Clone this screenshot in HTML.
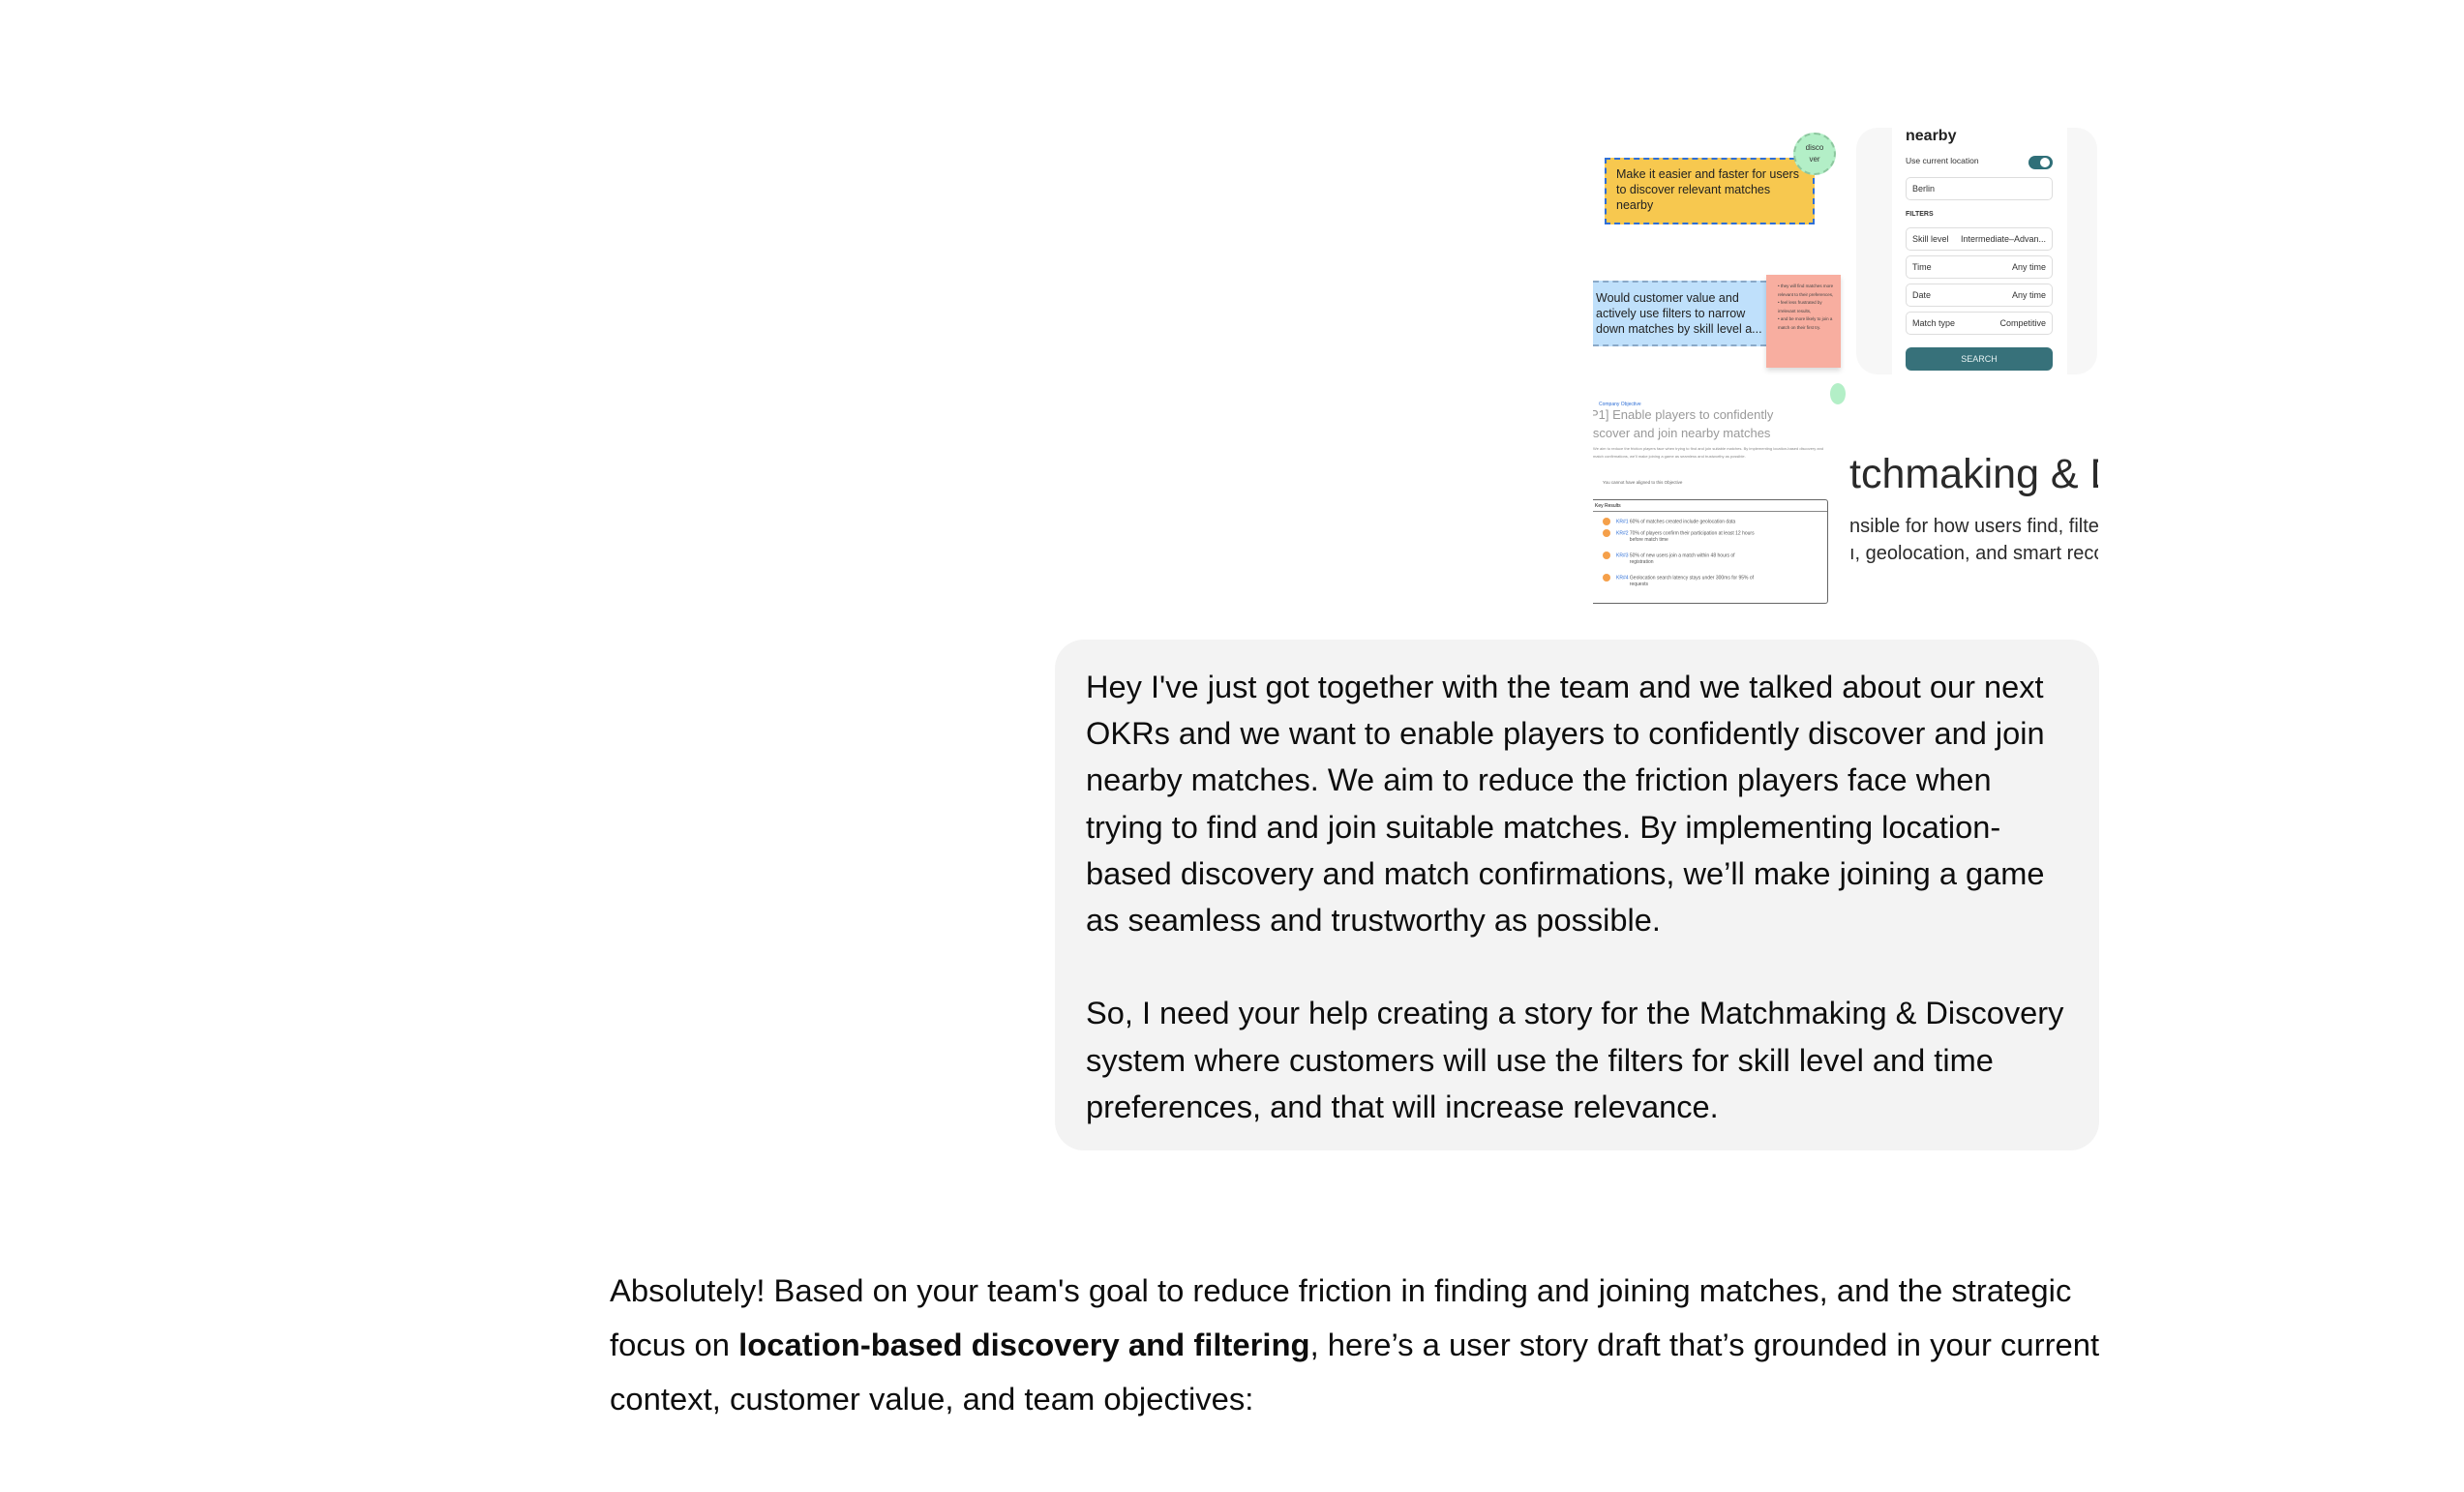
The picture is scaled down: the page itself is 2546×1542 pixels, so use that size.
<!DOCTYPE html>
<html><head><meta charset="utf-8"><style>
body{margin:0;width:2546px;height:1542px;background:#fff;font-family:"Liberation Sans",sans-serif;color:#0d0d0d;position:relative;overflow:hidden}
.abs{position:absolute}
.col{left:1646px;top:132px;width:522px;height:496px;overflow:hidden}
.col div{position:absolute;box-sizing:border-box}
.f{left:323px;width:152px;height:24px;border:1px solid #ddd;border-radius:5px;font-size:9px;padding:0 6px;display:flex;justify-content:space-between;align-items:center;color:#333}
.bub{left:1090px;top:661px;width:1079px;height:528px;background:#f3f3f3;border-radius:30px}
.bt{left:1122px;top:686px;font-size:32.6px;line-height:48.2px;white-space:nowrap}
.ans{left:630px;top:1306px;font-size:32.8px;line-height:56px;white-space:nowrap}
.kr{left:10px;font-size:5px;color:#555;white-space:nowrap}
.kr i{display:inline-block;width:8px;height:8px;border-radius:50%;background:#f5a04a;vertical-align:middle;margin-right:6px}
</style></head><body>
<div class="abs col">
 <div style="left:12px;top:31px;width:217px;height:69px;background:#f7c84f;border:2px dashed #2f6fd6;padding:7px 10px;font-size:12.5px;line-height:16px;color:#222">Make it easier and faster for users to discover relevant matches nearby</div>
 <div style="left:207px;top:5px;width:44px;height:44px;border-radius:50%;background:#b3efc7;border:2px dashed #8cc79e;font-size:8px;text-align:center;padding-top:8px;line-height:12px;color:#333">disco<br>ver</div>
 <div style="left:0;top:158px;width:179px;height:68px;background:#bfe0fb;border-top:2px dashed #8aa9c8;border-bottom:2px dashed #8aa9c8;padding:8px 3px;font-size:12.5px;line-height:16px;color:#222">Would customer value and actively use filters to narrow down matches by skill level a...</div>
 <div style="left:179px;top:152px;width:77px;height:96px;background:#f8aea0;box-shadow:0 3px 5px rgba(0,0,0,.15);font-size:4.5px;line-height:8.5px;padding:8px 4px 0 12px;color:#444">• they will find matches more relevant to their preferences,<br>• feel less frustrated by irrelevant results,<br>• and be more likely to join a match on their first try.</div>
 <div style="left:272px;top:0;width:249px;height:255px;background:#f7f7f7;border-radius:22px"></div>
 <div style="left:309px;top:0;width:181px;height:255px;background:#fff"></div>
 <div style="left:323px;top:0px;font-size:16px;font-weight:bold;color:#222">nearby</div>
 <div style="left:323px;top:29px;font-size:8.5px;color:#333">Use current location</div>
 <div style="left:450px;top:29px;width:25px;height:14px;border-radius:7px;background:#2f6f78"><div style="left:12px;top:2px;width:10px;height:10px;border-radius:50%;background:#fff"></div></div>
 <div class="f" style="top:51px">Berlin<span></span></div>
 <div style="left:323px;top:86px;font-size:7px;font-weight:bold;color:#333">FILTERS</div>
 <div class="f" style="top:103px">Skill level<span>Intermediate–Advan...</span></div>
 <div class="f" style="top:132px">Time<span>Any time</span></div>
 <div class="f" style="top:161px">Date<span>Any time</span></div>
 <div class="f" style="top:190px">Match type<span>Competitive</span></div>
 <div style="left:323px;top:227px;width:152px;height:24px;background:#37717a;border-radius:6px;color:#e6f2f3;font-size:9px;text-align:center;line-height:24px">SEARCH</div>
 <div style="left:245px;top:264px;width:16px;height:22px;background:#b3efc7;border-radius:50%"></div>
 <div style="left:6px;top:283px;font-size:5px;color:#2f6fd6">Company Objective</div>
 <div style="left:-3px;top:287px;font-size:13px;line-height:19px;color:#999;white-space:nowrap">P1] Enable players to confidently<br>iscover and join nearby matches</div>
 <div style="left:0;top:328px;width:250px;font-size:4px;line-height:8px;color:#888">We aim to reduce the friction players face when trying to find and join suitable matches. By implementing location-based discovery and match confirmations, we'll make joining a game as seamless and trustworthy as possible.</div>
 <div style="left:10px;top:364px;font-size:4.5px;color:#666">You cannot have aligned to this Objective</div>
 <div style="left:0;top:384px;width:243px;height:108px;border:1px solid #666;border-left:none;border-radius:0 3px 3px 0">
  <div style="left:0;top:0;width:242px;height:12px;border-bottom:1px solid #888;font-size:5px;padding:3px 2px">Key Results</div>
  <div class="kr" style="top:18px"><i></i><b style="color:#2f6fd6;font-weight:normal">KR#1</b> 60% of matches created include geolocation data</div>
  <div class="kr" style="top:30px"><i></i><b style="color:#2f6fd6;font-weight:normal">KR#2</b> 70% of players confirm their participation at least 12 hours<br>&nbsp;&nbsp;&nbsp;&nbsp;&nbsp;&nbsp;&nbsp;&nbsp;&nbsp;&nbsp;&nbsp;&nbsp;&nbsp;&nbsp;&nbsp;&nbsp;&nbsp;&nbsp;&nbsp;&nbsp;before match time</div>
  <div class="kr" style="top:53px"><i></i><b style="color:#2f6fd6;font-weight:normal">KR#3</b> 50% of new users join a match within 48 hours of<br>&nbsp;&nbsp;&nbsp;&nbsp;&nbsp;&nbsp;&nbsp;&nbsp;&nbsp;&nbsp;&nbsp;&nbsp;&nbsp;&nbsp;&nbsp;&nbsp;&nbsp;&nbsp;&nbsp;&nbsp;registration</div>
  <div class="kr" style="top:76px"><i></i><b style="color:#2f6fd6;font-weight:normal">KR#4</b> Geolocation search latency stays under 300ms for 95% of<br>&nbsp;&nbsp;&nbsp;&nbsp;&nbsp;&nbsp;&nbsp;&nbsp;&nbsp;&nbsp;&nbsp;&nbsp;&nbsp;&nbsp;&nbsp;&nbsp;&nbsp;&nbsp;&nbsp;&nbsp;requests</div>
 </div>
 <div style="left:265px;top:334px;font-size:43px;color:#2a2a2a;white-space:nowrap">tchmaking &amp; Discovery</div>
 <div style="left:265px;top:398px;font-size:20px;line-height:28px;color:#2a2a2a;white-space:nowrap">nsible for how users find, filter, and join<br>ı, geolocation, and smart recommendations</div>
</div>
<div class="abs bub"></div>
<div class="abs bt">Hey I've just got together with the team and we talked about our next<br>OKRs and we want to enable players to confidently discover and join<br>nearby matches. We aim to reduce the friction players face when<br>trying to find and join suitable matches. By implementing location-<br>based discovery and match confirmations, we’ll make joining a game<br>as seamless and trustworthy as possible.<br><br>So, I need your help creating a story for the Matchmaking &amp; Discovery<br>system where customers will use the filters for skill level and time<br>preferences, and that will increase relevance.</div>
<div class="abs ans">Absolutely! Based on your team's goal to reduce friction in finding and joining matches, and the strategic<br>focus on <b>location-based discovery and filtering</b>, here’s a user story draft that’s grounded in your current<br>context, customer value, and team objectives:</div>
</body></html>
